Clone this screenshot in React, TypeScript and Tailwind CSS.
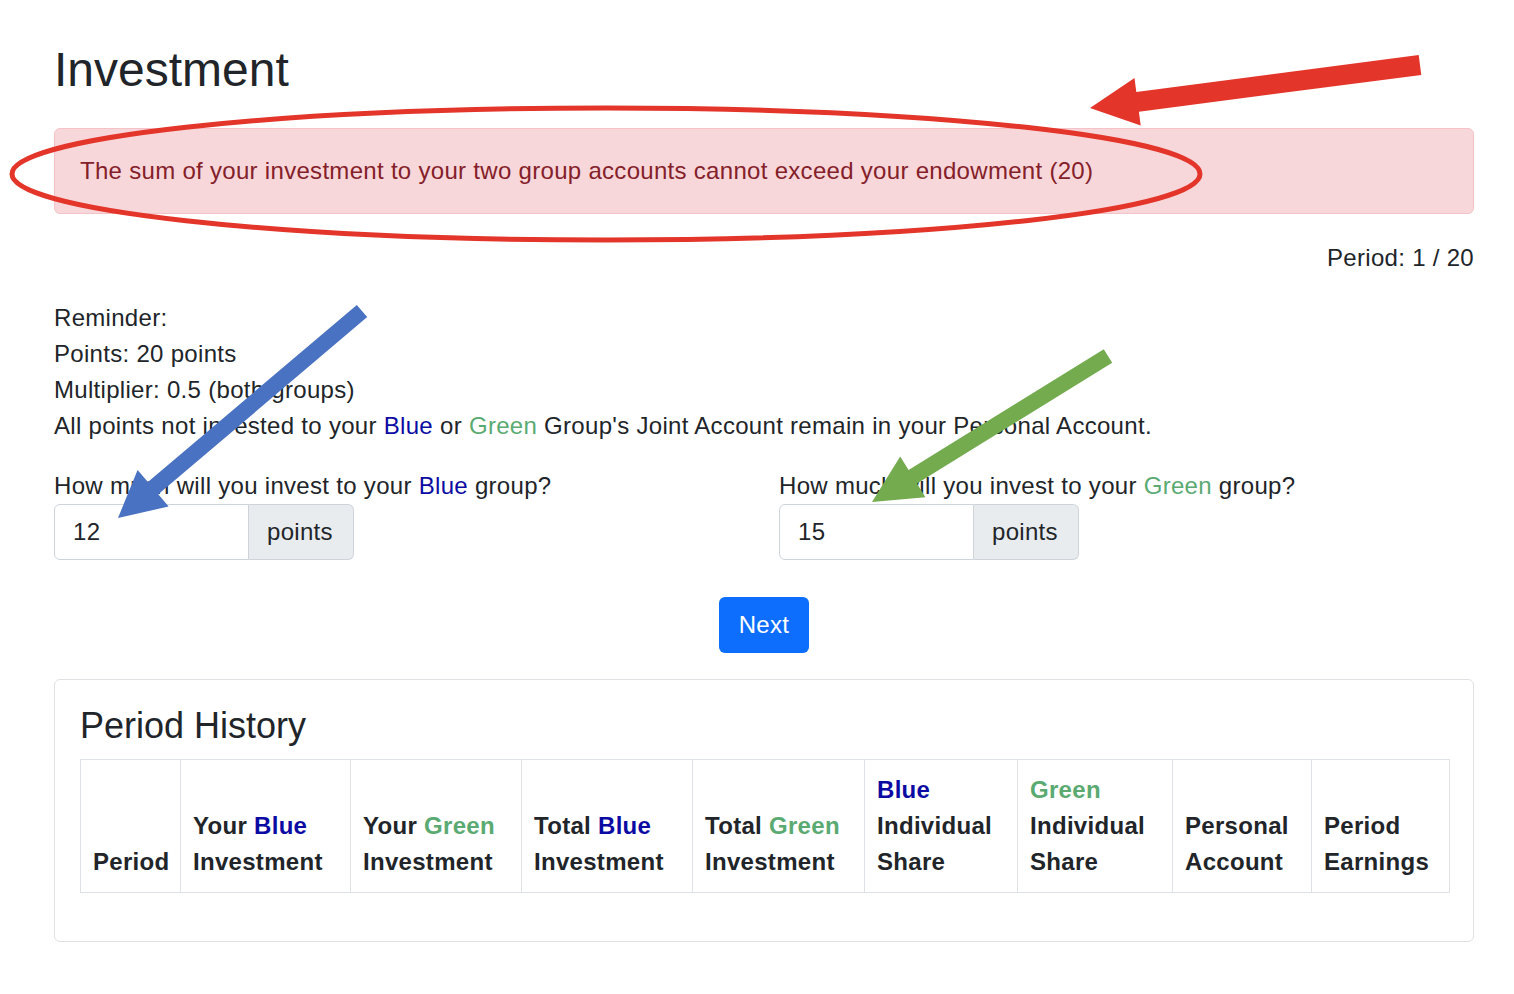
import React from "react";

const BLUE = "text-[#0b0ba3]";
const GREEN = "text-[#5aaa72]";

function Blue() {
  return <span className={BLUE}>Blue</span>;
}

function Green() {
  return <span className={GREEN}>Green</span>;
}

function PointsInput({ value }: { value: string }) {
  return (
    <div className="flex h-[56px] w-[300px]">
      <div className="flex w-[195px] items-center rounded-l-[6px] border border-[#ced4da] bg-white pl-[18px]">
        {value}
      </div>
      <div className="flex flex-1 items-center rounded-r-[6px] border border-l-0 border-[#ced4da] bg-[#e9ecef] pl-[18px]">
        points
      </div>
    </div>
  );
}

const headers: { w: string; content: React.ReactNode }[] = [
  { w: "w-[100px]", content: "Period" },
  { w: "w-[170px]", content: <>Your <Blue /><br />Investment</> },
  { w: "w-[171px]", content: <>Your <Green /><br />Investment</> },
  { w: "w-[171px]", content: <>Total <Blue /><br />Investment</> },
  { w: "w-[172px]", content: <>Total <Green /><br />Investment</> },
  { w: "w-[153px]", content: <><Blue /><br />Individual<br />Share</> },
  { w: "w-[155px]", content: <><Green /><br />Individual<br />Share</> },
  { w: "w-[139px]", content: <>Personal<br />Account</> },
  { w: "w-[138px]", content: <>Period<br />Earnings</> },
];

function Annotations() {
  return (
    <svg className="pointer-events-none absolute left-0 top-0" width="1514" height="994" viewBox="0 0 1514 994">
      <ellipse cx="606" cy="174" rx="594" ry="66" fill="none" stroke="#e3352a" strokeWidth="5" />
      <polygon
        fill="#e3352a"
        points="1090,108 1134.5,78 1136.3,91.9 1418.7,55.1 1421.3,74.9 1138.9,111.7 1140.7,125.6"
      />
      <polygon
        fill="#4a72c2"
        points="118,518 137.6,469.9 147.9,482.1 356.8,304.9 367.2,317.1 158.3,494.3 168.6,506.5"
      />
      <polygon
        fill="#74ab4f"
        points="872,502 900.2,456.4 908.6,470 1103.8,349.2 1112.2,362.8 917,483.6 925.4,497.2"
      />
    </svg>
  );
}

export default function App() {
  return (
    <div className="relative min-h-[994px] w-[1514px] bg-white font-['Liberation_Sans',Arial,sans-serif] text-[24px] leading-[36px] tracking-[0.3px] text-[#212529]">
      <div className="ml-[54px] w-[1420px] pt-[41px]">
        <h2 className="mb-[29px] text-[48px] font-medium leading-[58px] tracking-normal">Investment</h2>

        <div className="mb-[26px] rounded-[6px] border border-[#f5c2c7] bg-[#f8d7da] px-[25px] py-[24px] text-[#842029]">
          The sum of your investment to your two group accounts cannot exceed your endowment (20)
        </div>

        <p className="mb-[24px] text-right">Period: 1 / 20</p>

        <div className="mb-[24px]">
          <p>Reminder:</p>
          <p>Points: 20 points</p>
          <p>Multiplier: 0.5 (both groups)</p>
          <p>
            All points not invested to your <Blue /> or <Green /> Group's Joint Account remain in your Personal Account.
          </p>
        </div>

        <div className="grid grid-cols-2 gap-[30px]">
          <div>
            <p>
              How much will you invest to your <Blue /> group?
            </p>
            <PointsInput value="12" />
          </div>
          <div>
            <p>
              How much will you invest to your <Green /> group?
            </p>
            <PointsInput value="15" />
          </div>
        </div>

        <div className="mt-[37px] flex justify-center">
          <button className="h-[56px] w-[90px] rounded-[6px] bg-[#0d6efd] text-white">Next</button>
        </div>

        <div className="mt-[26px] rounded-[6px] border border-[#dfe1e4] px-[25px] pb-[24px] pt-[24px]">
          <h4 className="mb-[12px] text-[36px] font-medium leading-[43px] tracking-normal">Period History</h4>
          <table className="mb-[24px] w-full table-fixed border-collapse">
            <thead>
              <tr>
                {headers.map((h, i) => (
                  <th
                    key={i}
                    className={`${h.w} whitespace-nowrap border border-[#dee2e6] p-[12px] text-left align-bottom font-bold`}
                  >
                    {h.content}
                  </th>
                ))}
              </tr>
            </thead>
          </table>
        </div>
      </div>
      <Annotations />
    </div>
  );
}
